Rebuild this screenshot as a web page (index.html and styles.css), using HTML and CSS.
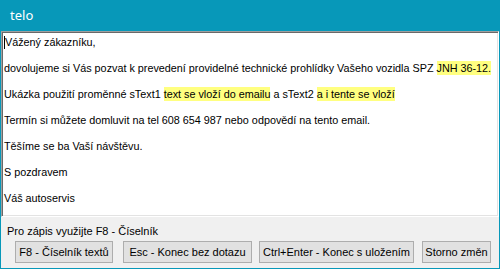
FILE: index.html
```html
<html>

<head>
	<meta charset="utf-8">
	<link rel="stylesheet" href="styles.css">
</head>

<body>
	<div class="okno">
		<div class="titulek">telo</div>
		<div class="editor">
			<p><span class="kurzor"></span>Vážený zákazníku,</p>
			<p>dovolujeme si Vás pozvat k prevedení providelné technické prohlídky Vašeho vozidla SPZ <span class="pole">JNH 36-12.</span></p>
			<p>Ukázka použití proměnné sText1 <span class="pole">text se vloží do emailu</span> a sText2 <span class="pole">a i tente se vloží</span></p>
			<p>Termín si můžete domluvit na tel 608 654 987 nebo odpovědí na tento email.</p>
			<p>Těšíme se ba Vaší návštěvu.</p>
			<p>S pozdravem</p>
			<p>Váš autoservis</p>
		</div>
		<div class="paticka">
			<div class="napoveda">Pro zápis využijte F8 - Číselník</div>
			<div class="tlacitka">
				<button class="tl tl-f8">F8 - Číselník textů</button>
				<button class="tl tl-esc">Esc - Konec bez dotazu</button>
				<button class="tl tl-ctrl">Ctrl+Enter - Konec s uložením</button>
				<button class="tl tl-storno">Storno změn</button>
			</div>
		</div>
	</div>
</body>

</html>
```
FILE: styles.css
```css
body {
	margin: 0;
	font-family: "Liberation Sans", Arial, sans-serif;
	font-size: 11px;
	color: #000000;
}

.okno {
	width: 500px;
	height: 269px;
	box-sizing: border-box;
	border: 1px solid #0798b9;
	border-top: none;
	background-color: #f0f0f0;
	display: flex;
	flex-direction: column;
}

.titulek {
	height: 31px;
	margin: 0 -1px;
	background-color: #0798b9;
	color: #ffffff;
	font-family: "Noto Sans", sans-serif;
	font-size: 13px;
	line-height: 30px;
	padding-left: 10px;
}

.editor {
	height: 186px;
	box-sizing: border-box;
	background-color: #ffffff;
	border-top: 1px solid #a0a0a0;
	border-left: 1px solid #a0a0a0;
	border-right: 1px solid #ffffff;
	border-bottom: 1px solid #ffffff;
	box-shadow: inset 1px 1px 0 #696969, inset -1px -1px 0 #e3e3e3;
	padding: 4px 0 0 2px;
	font-size: 10.8px;
}

.editor p {
	margin: 0 0 13px 0;
	line-height: 13px;
	white-space: nowrap;
}

.pole {
	background-color: #ffff80;
	padding: 1px 0;
}

.kurzor {
	display: inline-block;
	width: 1px;
	height: 13px;
	background-color: #000000;
	vertical-align: top;
}

.paticka {
	flex: 1;
	padding: 8px 0 0 6px;
}

.napoveda {
	line-height: 13px;
	margin-bottom: 3px;
}

.tlacitka {
	display: flex;
	gap: 8px;
	padding-left: 8px;
}

.tl {
	height: 22px;
	box-sizing: border-box;
	background-color: #e1e1e1;
	border: 1px solid #adadad;
	font-family: "Liberation Sans", Arial, sans-serif;
	font-size: 11px;
	color: #000000;
	padding: 0;
}

.tl-f8 {
	width: 98px;
	margin-right: 2px;
}

.tl-esc {
	width: 129px;
	margin-right: -1px;
}

.tl-ctrl {
	width: 155px;
}

.tl-storno {
	width: 69px;
}
```
